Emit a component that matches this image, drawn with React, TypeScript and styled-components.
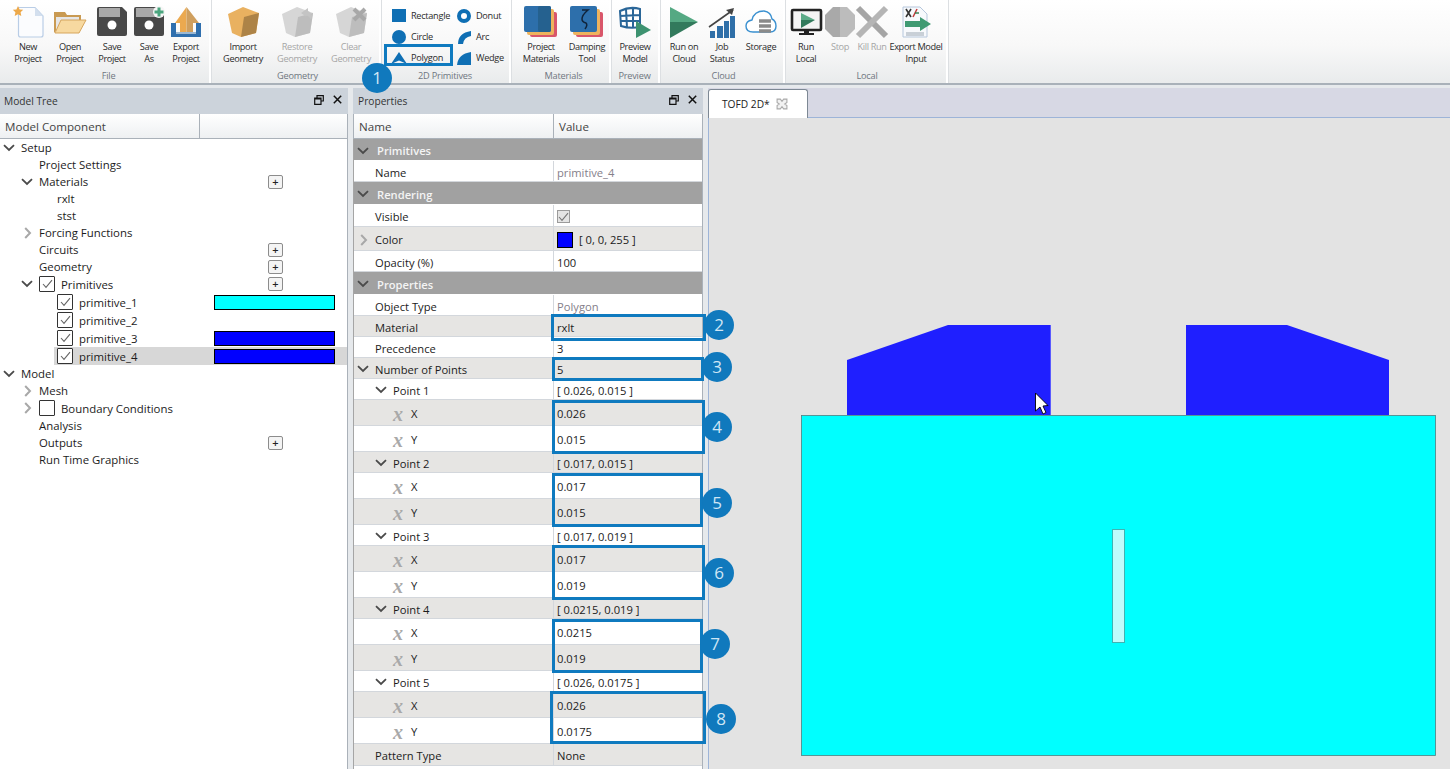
import React from 'react';
import styled, { createGlobalStyle } from 'styled-components';

const Global = createGlobalStyle`
  html, body { margin: 0; padding: 0; background: #fff; }
  body { font-family: "Open Sans", "Liberation Sans", sans-serif; color: #1c1c1c; }
`;

const Page = styled.div`
  position: relative;
  width: 1450px;
  height: 769px;
  overflow: hidden;
  display: flex;
  flex-direction: column;
  background: #e6e9ec;
`;

/* ---------- ribbon ---------- */
const Ribbon = styled.div`
  height: 83px;
  flex: none;
  display: flex;
  background: linear-gradient(#ffffff, #f8f8f8 55%, #e9ebec);
  border-bottom: 2px solid #a9b1b9;
`;

const Group = styled.div<{ $w: number; $pad?: number }>`
  width: ${({ $w }) => $w}px;
  flex: none;
  box-sizing: border-box;
  padding-left: ${({ $pad }) => $pad || 0}px;
  display: flex;
  flex-direction: column;
  border-right: 2px solid #fff;
  box-shadow: 1px 0 0 #dcdfe2;
`;

const GroupBody = styled.div`
  flex: 1;
  display: flex;
  min-height: 0;
`;

const GroupLabel = styled.div`
  height: 14px;
  line-height: 13px;
  text-align: center;
  font-size: 9.2px;
  letter-spacing: -0.2px;
  color: #6f7680;
`;

const RibbonButton = styled.div<{ $w: number; $off?: boolean }>`
  width: ${({ $w }) => $w}px;
  flex: none;
  padding-top: 6px;
  display: flex;
  flex-direction: column;
  align-items: center;
  text-align: center;
  font-size: 9.2px;
  line-height: 12px;
  letter-spacing: -0.35px;
  white-space: pre;
  color: ${({ $off }) => ($off ? '#a6a6a6' : '#2b2b2b')};
  svg { margin-bottom: 3px; display: block; overflow: visible; }
`;

const PrimGrid = styled.div`
  display: grid;
  grid-template-columns: 65px 60px;
  grid-auto-rows: 21px;
  padding: 5px 0 0 11px;
`;

const PrimItem = styled.div`
  display: flex;
  align-items: center;
  gap: 5px;
  font-size: 9.2px;
  letter-spacing: -0.3px;
  color: #2b2b2b;
  svg { overflow: visible; }
`;

/* ---------- panels ---------- */
const Workspace = styled.div`
  flex: 1;
  min-height: 0;
  display: flex;
  padding-top: 3px;
`;

const Panel = styled.div<{ $w: number; $gap: number }>`
  width: ${({ $w }) => $w}px;
  flex: none;
  margin-right: ${({ $gap }) => $gap}px;
  display: flex;
  flex-direction: column;
  background: #fff;
`;

const PanelHead = styled.div<{ $pad: number }>`
  height: 26px;
  flex: none;
  box-sizing: border-box;
  padding: 0 6px 0 ${({ $pad }) => $pad}px;
  display: flex;
  align-items: center;
  justify-content: space-between;
  background: #ccd3db;
  font-size: 10.2px;
  color: #333;
`;

const HeadIcons = styled.div`
  display: flex;
  align-items: center;
  gap: 9px;
  margin-top: -3px;
`;

const ColumnHead = styled.div<{ $edge?: boolean }>`
  height: 25px;
  flex: none;
  box-sizing: border-box;
  display: grid;
  grid-template-columns: 200px 1fr;
  background: linear-gradient(#fff, #eef0f2);
  border: 1px solid #aab1b9;
  border-top: 0;
  border-left-width: ${({ $edge }) => ($edge ? 1 : 0)}px;
  font-size: 11.6px;
  line-height: 25px;
  color: #444;
`;

const ColumnCell = styled.div`
  padding-left: 5px;
  border-right: 1px solid #aab1b9;
  &:last-child { border-right: 0; }
`;

/* tree */
const TreeBody = styled.div`
  flex: 1;
  border-right: 1px solid #aab1b9;
`;

const TreeRow = styled.div<{ $tall?: boolean; $selected?: boolean }>`
  height: ${({ $tall }) => ($tall ? 18 : 17)}px;
  display: grid;
  grid-template-columns: 214px 1fr;
  align-items: center;
  font-size: 11.4px;
  background: ${({ $selected }) =>
    $selected ? 'linear-gradient(to right, transparent 54px, #d7d7d7 54px)' : 'transparent'};
`;

const TreeName = styled.div<{ $indent: number }>`
  display: flex;
  align-items: center;
  padding-left: ${({ $indent }) => $indent}px;
  white-space: nowrap;
`;

const ChevronSlot = styled.span`
  width: 18px;
  flex: none;
  display: flex;
  justify-content: flex-start;
`;

const Check = styled.span`
  width: 16px;
  height: 16px;
  flex: none;
  box-sizing: border-box;
  margin-right: 6px;
  border: 1px solid #333;
  border-radius: 1px;
  background: #fff;
  display: flex;
  align-items: center;
  justify-content: center;
`;

const PlusButton = styled.div`
  width: 15px;
  height: 14px;
  margin-left: 54px;
  box-sizing: border-box;
  border: 1px solid #8c8c8c;
  border-radius: 2px;
  background: #f4f4f4;
  font-size: 11px;
  font-weight: 600;
  line-height: 12px;
  text-align: center;
  color: #222;
`;

const ColorBar = styled.span<{ $color: string }>`
  display: block;
  width: 121px;
  height: 15px;
  box-sizing: border-box;
  border: 1px solid #000;
  background: ${({ $color }) => $color};
`;

/* property grid */
const PropTable = styled.div`
  flex: 1;
  border-left: 1px solid #a5a5a5;
  border-right: 1px solid #aab1b9;
`;

const SectionRow = styled.div<{ $h: number }>`
  height: ${({ $h }) => $h}px;
  box-sizing: border-box;
  padding: 2px 0 0 3px;
  display: flex;
  align-items: center;
  background: #a1a1a1;
  border-bottom: 1px solid #fff;
  color: #f4f4f4;
  font-size: 11.2px;
  font-weight: 600;
  span { margin-left: 8px; }
`;

const PropRow = styled.div<{ $h: number; $shade?: boolean }>`
  height: ${({ $h }) => $h}px;
  box-sizing: border-box;
  display: grid;
  grid-template-columns: 200px 1fr;
  background: ${({ $shade }) => ($shade ? '#e6e5e3' : '#fff')};
  border-bottom: 1px solid #d3d7dc;
  font-size: 11.2px;
`;

const PropName = styled.div<{ $indent: number }>`
  display: flex;
  align-items: center;
  padding: 2px 0 0 ${({ $indent }) => $indent}px;
  border-right: 1px solid #d3d7dc;
  white-space: nowrap;
`;

const PropValue = styled.div<{ $muted?: boolean }>`
  display: flex;
  align-items: center;
  gap: 6px;
  padding: 2px 0 0 3px;
  white-space: nowrap;
  color: ${({ $muted }) => ($muted ? '#85808a' : '#1c1c1c')};
`;

const VarMark = styled.span`
  width: 12px;
  margin-right: 7px;
  text-align: center;
  font-family: "Liberation Serif", serif;
  font-style: italic;
  font-weight: 700;
  font-size: 20px;
  line-height: 16px;
  color: #a9a9a9;
`;

const Swatch = styled.span`
  width: 16px;
  height: 16px;
  box-sizing: border-box;
  border: 1px solid #000;
  background: #0000ff;
`;

const GrayBox = styled.span`
  width: 13px;
  height: 13px;
  box-sizing: border-box;
  border: 1px solid #9b9b9b;
  background: #e4e4e4;
  display: flex;
  align-items: center;
  justify-content: center;
`;

/* document area */
const DocArea = styled.div`
  flex: 1;
  min-width: 0;
  display: flex;
  flex-direction: column;
`;

const TabStrip = styled.div`
  height: 30px;
  flex: none;
  box-sizing: border-box;
  display: flex;
  align-items: flex-end;
  background: #d7d8e4;
  border-bottom: 1px solid #9db4d8;
`;

const Tab = styled.div`
  width: 100px;
  height: 29px;
  margin-bottom: -1px;
  box-sizing: border-box;
  display: flex;
  align-items: center;
  gap: 6px;
  padding-left: 13px;
  background: #fff;
  border: 1px solid #7d8894;
  border-bottom: 0;
  border-radius: 3px 3px 0 0;
  font-size: 10.2px;
  color: #222;
`;

const Canvas = styled.div`
  flex: 1;
  min-height: 0;
  background: #e3e3e3;
  border-left: 1px solid #9db4d8;
  svg { display: block; }
`;

/* annotations lying over the screenshot */
const Callout = styled.div`
  position: absolute;
  box-sizing: border-box;
  border: 3px solid #0f7abf;
  pointer-events: none;
`;

const Badge = styled.div`
  position: absolute;
  width: 30px;
  height: 30px;
  margin: -15px 0 0 -15px;
  border-radius: 50%;
  background: #1079bd;
  color: #cfe6f5;
  font-size: 17px;
  line-height: 30px;
  text-align: center;
`;

/* ---------- small drawings ---------- */
const Chevron = ({ open }: { open: boolean }) =>
  open ? (
    <svg width="12" height="8" viewBox="0 0 12 8">
      <path d="M1 1.2 L6 6 L11 1.2" fill="none" stroke="#4a4a4a" strokeWidth="1.8" />
    </svg>
  ) : (
    <svg width="12" height="12" viewBox="-3 0 12 12">
      <path d="M1.2 1 L6 6 L1.2 11" fill="none" stroke="#a8a8a8" strokeWidth="2" />
    </svg>
  );

const Tick = ({ color = '#666' }: { color?: string }) => (
  <svg width="11" height="10" viewBox="0 0 11 10">
    <path d="M1 5 L4 8.4 L10 1.2" fill="none" stroke={color} strokeWidth="1.1" />
  </svg>
);

const RestoreIcon = () => (
  <svg width="10" height="10" viewBox="0 0 10 10">
    <path d="M3 2.5 V.7 H9.3 V6 H7.2 M.7 3 H7 V9.3 H.7 Z M.7 4 H7" fill="none" stroke="#111" strokeWidth="1.2" />
  </svg>
);

const CloseIcon = () => (
  <svg width="9" height="9" viewBox="0 0 9 9">
    <path d="M.8 .8 L8.2 8.2 M8.2 .8 L.8 8.2" stroke="#111" strokeWidth="1.5" />
  </svg>
);

const TabClose = () => (
  <svg width="12" height="12" viewBox="0 0 11 11">
    <path d="M1 1 H4 L5.5 3 L7 1 H10 V4 L8 5.5 L10 7 V10 H7 L5.5 8 L4 10 H1 V7 L3 5.5 L1 4 Z" fill="#f2f2f2" stroke="#a9a9a9" />
  </svg>
);

const Icon = ({ children, w = 32, h = 32 }: { children: React.ReactNode; w?: number; h?: number }) => (
  <svg width={w} height={h} viewBox={`0 0 ${w} ${h}`}>
    {children}
  </svg>
);

const NewIcon = () => (
  <Icon>
    <path d="M6.5 1.5 H23 L31 10 V29 Q31 31 29 31 H8.5 Q6.5 31 6.5 29 Z" fill="#fbfcfe" stroke="#b9cde6" strokeWidth="1.2" />
    <path d="M23 1.5 V10 H31 Z" fill="#d3dfee" />
    <path d="M6 0 L7.6 3.4 L11.2 3.8 L8.6 6.2 L9.3 10 L6 8.2 L2.7 10 L3.4 6.2 L.8 3.8 L4.4 3.4 Z" fill="#eda94a" />
  </Icon>
);

const OpenIcon = () => (
  <Icon>
    <path d="M0 27 V6 H11 L13 9 H27 V14 H10 Z" fill="#c99a52" />
    <path d="M2 27 V11 H25 V14 H8 Z" fill="#e6e6e6" />
    <path d="M7 14 H32 L25 27 H1 Z" fill="#f7d9a0" stroke="#d6a55c" />
  </Icon>
);

const SaveIcon = ({ plus }: { plus?: boolean }) => (
  <Icon>
    <path d="M1 3 Q1 1 3 1 H26 L31 6 V28 Q31 30 29 30 H3 Q1 30 1 28 Z" fill="#484848" />
    <rect x="3" y="2" width="21" height="9" fill="#a8a8a8" />
    <circle cx="16" cy="19" r="4.5" fill="#fff" />
    {plus && (
      <>
        <circle cx="26" cy="6" r="6" fill="#f6f6f6" />
        <path d="M26 1.5 V10.5 M21.5 6 H30.5" stroke="#4aa57e" strokeWidth="3" />
      </>
    )}
  </Icon>
);

const ExportIcon = () => (
  <Icon>
    <path d="M1 17 H6 V26 H26 V17 H31 V31 H1 Z" fill="#2f6fae" />
    <rect x="6" y="26" width="20" height="2" fill="#9cb8d2" />
    <path d="M16.5 1 L5 17 H10 V26 H16.5 Z" fill="#eba94f" />
    <path d="M16.5 1 L29 17 H23 V26 H16.5 Z" fill="#cf9f5e" />
  </Icon>
);

const CubeIcon = ({ off, cross }: { off?: boolean; cross?: boolean }) => (
  <Icon>
    <path d="M1 8 L16 1 L32 7 L29 27 L14 31 L5 27 Z" fill={off ? '#d6d6d6' : '#e9b160'} />
    <path d="M17 11 L32 7 L29 27 L14 31 Z" fill={off ? '#bdbdbd' : '#ad8347'} />
    {cross && <path d="M19 3 L30 14 M30 3 L19 14" stroke="#a8a8a8" strokeWidth="4" />}
    {off && !cross && <path d="M20 7 L27 2 L27 5 Q33 8 30 14 Q28 9 24 10 L27 12 Z" fill="#c4c4c4" />}
  </Icon>
);

const StackIcon = ({ zeta }: { zeta?: boolean }) => (
  <Icon w={34}>
    <rect x="6" y="6" width="27" height="25" rx="2" fill="#d9566a" />
    <rect x="3" y="3" width="27" height="26" rx="2" fill="#eeb35d" />
    <rect x="0" y="0" width="27" height="26" rx="2" fill="#2d6fab" />
    {!zeta && <rect x="14" y="0" width="13" height="26" rx="2" fill="#25618f" />}
    {zeta && <path d="M12 4 H18 Q12 9 12 13 Q12 16 16 17 Q18 19 15 23" fill="none" stroke="#10243a" strokeWidth="1.5" />}
  </Icon>
);

const PreviewIcon = () => (
  <Icon w={34}>
    <path d="M2 5 Q12 0 22 3 L22 21 Q12 23 3 20 Z M8 3 L9 22 M15 2 L15 22 M2 10 L22 9 M2 15 L22 15" fill="#fff" stroke="#2a6698" strokeWidth="2" />
    <path d="M18 15 L33 24 L18 32 Z" fill="#3d9270" />
  </Icon>
);

const PlayIcon = () => (
  <Icon>
    <path d="M2 1 L30 16 H2 Z" fill="#55a983" />
    <path d="M2 16 H30 L2 32 Z" fill="#327a5c" />
  </Icon>
);

const StatusIcon = () => (
  <Icon w={26}>
    <rect x="1" y="25" width="5" height="7" fill="#2f6fa8" />
    <rect x="8" y="20" width="6" height="12" fill="#2f6fa8" />
    <rect x="15" y="15" width="5" height="17" fill="#2f6fa8" />
    <rect x="21" y="10" width="5" height="22" fill="#2f6fa8" />
    <path d="M0 21 L24 4" stroke="#444" strokeWidth="1.6" />
    <path d="M17 4 L25 2 L23 9 Z" fill="#444" />
  </Icon>
);

const CloudIcon = () => (
  <Icon>
    <path d="M8 26 Q1 26 1 20 Q1 15 7 14 Q9 5 19 5 Q26 6 27 13 Q31 15 31 20 Q31 26 25 26 Z" fill="#fff" stroke="#3a90d0" strokeWidth="1.4" />
    <path d="M14 15 H26 M14 20 H26 M14 25 H26" stroke="#8a8a8a" strokeWidth="3.4" />
  </Icon>
);

const MonitorIcon = () => (
  <Icon>
    <rect x="2" y="4" width="29" height="20" rx="1" fill="#f4f4f4" stroke="#222" strokeWidth="2.6" />
    <path d="M11 7 L25 14 H11 Z" fill="#5cab88" />
    <path d="M11 14 H25 L11 22 Z" fill="#327a5c" />
    <path d="M14 25 H19 V27 H24 V29 H9 V27 H14 Z" fill="#222" />
  </Icon>
);

const StopIcon = () => (
  <Icon>
    <path d="M9 1 H16 V31 H9 L1 23 V9 Z" fill="#a9a9a9" />
    <path d="M16 1 H23 L31 9 V23 L23 31 H16 Z" fill="#bcbcbc" />
  </Icon>
);

const KillIcon = () => (
  <Icon>
    <path d="M2 2 L30 30" stroke="#a5a5a5" strokeWidth="6" />
    <path d="M30 2 L2 30" stroke="#b5b5b5" strokeWidth="6" />
  </Icon>
);

const ExportModelIcon = () => (
  <Icon>
    <path d="M3 1 H20 L27 8 V31 H3 Z" fill="#f7f9fc" stroke="#b6c7dc" />
    <path d="M6 3 L11 11 M11 3 L6 11" stroke="#333" strokeWidth="1.6" />
    <path d="M13 11 L17 3" stroke="#c23b3b" strokeWidth="1.6" />
    <path d="M15 7 L19 7" stroke="#2c7a4a" strokeWidth="1.4" />
    <path d="M6 27 H24 M6 29 H24" stroke="#9aa6b2" />
    <path d="M5 15 H20 V11 L31 18 L20 25 V21 H5 Z" fill="#3f9a73" />
  </Icon>
);

const Prim = ({ d }: { d: React.ReactNode }) => (
  <svg width="14" height="14" viewBox="0 0 14 14" style={{ flex: 'none' }}>
    {d}
  </svg>
);
const blue = '#0f6fb4';

/* ---------- data ---------- */
type Btn = { label: string; w: number; icon: React.ReactNode; off?: boolean };
type BtnGroup = { label: string; w: number; pad?: number; items: Btn[] };

const groups: BtnGroup[] = [
  {
    label: 'File',
    w: 211,
    pad: 8,
    items: [
      { label: 'New\nProject', w: 40, icon: <NewIcon /> },
      { label: 'Open\nProject', w: 44, icon: <OpenIcon /> },
      { label: 'Save\nProject', w: 40, icon: <SaveIcon /> },
      { label: 'Save\nAs', w: 34, icon: <SaveIcon plus /> },
      { label: 'Export\nProject', w: 40, icon: <ExportIcon /> },
    ],
  },
  {
    label: 'Geometry',
    w: 170,
    pad: 5,
    items: [
      { label: 'Import\nGeometry', w: 54, icon: <CubeIcon /> },
      { label: 'Restore\nGeometry', w: 54, icon: <CubeIcon off />, off: true },
      { label: 'Clear\nGeometry', w: 54, icon: <CubeIcon off cross />, off: true },
    ],
  },
];

const groups2: BtnGroup[] = [
  {
    label: 'Materials',
    w: 100,
    pad: 7,
    items: [
      { label: 'Project\nMaterials', w: 46, icon: <StackIcon /> },
      { label: 'Damping\nTool', w: 46, icon: <StackIcon zeta /> },
    ],
  },
  {
    label: 'Preview',
    w: 49,
    items: [{ label: 'Preview\nModel', w: 48, icon: <PreviewIcon /> }],
  },
  {
    label: 'Cloud',
    w: 125,
    pad: 4,
    items: [
      { label: 'Run on\nCloud', w: 40, icon: <PlayIcon /> },
      { label: 'Job\nStatus', w: 36, icon: <StatusIcon /> },
      { label: 'Storage', w: 42, icon: <CloudIcon /> },
    ],
  },
  {
    label: 'Local',
    w: 163,
    pad: 3,
    items: [
      { label: 'Run\nLocal', w: 36, icon: <MonitorIcon /> },
      { label: 'Stop', w: 32, icon: <StopIcon />, off: true },
      { label: 'Kill Run', w: 32, icon: <KillIcon />, off: true },
      { label: 'Export Model\nInput', w: 56, icon: <ExportModelIcon /> },
    ],
  },
];

const prims: { label: string; icon: React.ReactNode }[] = [
  { label: 'Rectangle', icon: <Prim d={<rect width="14" height="13" fill={blue} />} /> },
  { label: 'Donut', icon: <Prim d={<circle cx="7" cy="7" r="5" fill="#fff" stroke={blue} strokeWidth="4" />} /> },
  { label: 'Circle', icon: <Prim d={<circle cx="7" cy="7" r="7" fill={blue} />} /> },
  { label: 'Arc', icon: <Prim d={<path d="M1 14 Q1 3 14 1 V6 Q7 7 6 14 Z" fill={blue} />} /> },
  { label: 'Polygon', icon: <Prim d={<path d="M7 1 L15 13 L7 9.5 L-1 13 Z" fill={blue} />} /> },
  { label: 'Wedge', icon: <Prim d={<path d="M0 14 Q1 3 14 1 V14 Z" fill={blue} />} /> },
];

type TreeItem = {
  name: string;
  indent: number;
  tall?: boolean;
  chevron?: 'open' | 'closed';
  check?: boolean | 'empty';
  plus?: boolean;
  bar?: string;
  selected?: boolean;
};

const tree: TreeItem[] = [
  { name: 'Setup', indent: 3, chevron: 'open' },
  { name: 'Project Settings', indent: 39 },
  { name: 'Materials', indent: 21, chevron: 'open', plus: true },
  { name: 'rxlt', indent: 57 },
  { name: 'stst', indent: 57 },
  { name: 'Forcing Functions', indent: 21, chevron: 'closed' },
  { name: 'Circuits', indent: 39, plus: true },
  { name: 'Geometry', indent: 39, plus: true },
  { name: 'Primitives', indent: 21, chevron: 'open', check: true, plus: true, tall: true },
  { name: 'primitive_1', indent: 57, check: true, bar: '#00ffff', tall: true },
  { name: 'primitive_2', indent: 57, check: true, tall: true },
  { name: 'primitive_3', indent: 57, check: true, bar: '#0000ff', tall: true },
  { name: 'primitive_4', indent: 57, check: true, bar: '#0000ff', tall: true, selected: true },
  { name: 'Model', indent: 3, chevron: 'open' },
  { name: 'Mesh', indent: 21, chevron: 'closed' },
  { name: 'Boundary Conditions', indent: 21, chevron: 'closed', check: 'empty', tall: true },
  { name: 'Analysis', indent: 39 },
  { name: 'Outputs', indent: 39, plus: true },
  { name: 'Run Time Graphics', indent: 39 },
];

const points = [
  { name: 'Point 1', sum: '[ 0.026, 0.015 ]', x: '0.026', y: '0.015' },
  { name: 'Point 2', sum: '[ 0.017, 0.015 ]', x: '0.017', y: '0.015' },
  { name: 'Point 3', sum: '[ 0.017, 0.019 ]', x: '0.017', y: '0.019' },
  { name: 'Point 4', sum: '[ 0.0215, 0.019 ]', x: '0.0215', y: '0.019' },
  { name: 'Point 5', sum: '[ 0.026, 0.0175 ]', x: '0.026', y: '0.0175' },
];

const callouts = [
  { n: 1, x: 384, y: 44, w: 69, h: 22, cx: 377, cy: 78 },
  { n: 2, x: 551, y: 314, w: 155, h: 27, cx: 719, cy: 325 },
  { n: 3, x: 552, y: 357, w: 152, h: 24, cx: 717, cy: 367 },
  { n: 4, x: 552, y: 400, w: 153, h: 54, cx: 717, cy: 427 },
  { n: 5, x: 552, y: 473, w: 151, h: 54, cx: 717, cy: 503 },
  { n: 6, x: 552, y: 545, w: 153, h: 55, cx: 719, cy: 573 },
  { n: 7, x: 552, y: 619, w: 151, h: 54, cx: 715, cy: 644 },
  { n: 8, x: 550, y: 691, w: 156, h: 53, cx: 721, cy: 719 },
];

const RibbonGroup = ({ g }: { g: BtnGroup }) => (
  <Group $w={g.w} $pad={g.pad}>
    <GroupBody>
      {g.items.map((b) => (
        <RibbonButton key={b.label} $w={b.w} $off={b.off}>
          {b.icon}
          {b.label}
        </RibbonButton>
      ))}
    </GroupBody>
    <GroupLabel>{g.label}</GroupLabel>
  </Group>
);

const Section = ({ name, h }: { name: string; h: number }) => (
  <SectionRow $h={h}>
    <Chevron open />
    <span>{name}</span>
  </SectionRow>
);

export default function App() {
  return (
    <Page>
      <Global />
      <Ribbon>
        {groups.map((g) => (
          <RibbonGroup key={g.label} g={g} />
        ))}
        <Group $w={130}>
          <GroupBody>
            <PrimGrid>
              {prims.map((p) => (
                <PrimItem key={p.label}>
                  {p.icon}
                  {p.label}
                </PrimItem>
              ))}
            </PrimGrid>
          </GroupBody>
          <GroupLabel>2D Primitives</GroupLabel>
        </Group>
        {groups2.map((g) => (
          <RibbonGroup key={g.label} g={g} />
        ))}
      </Ribbon>

      <Workspace>
        <Panel $w={348} $gap={5}>
          <PanelHead $pad={4}>
            Model Tree
            <HeadIcons>
              <RestoreIcon />
              <CloseIcon />
            </HeadIcons>
          </PanelHead>
          <ColumnHead>
            <ColumnCell>Model Component</ColumnCell>
            <ColumnCell />
          </ColumnHead>
          <TreeBody>
            {tree.map((t) => (
              <TreeRow key={t.name} $tall={t.tall} $selected={t.selected}>
                <TreeName $indent={t.indent}>
                  {t.chevron && (
                    <ChevronSlot>
                      <Chevron open={t.chevron === 'open'} />
                    </ChevronSlot>
                  )}
                  {t.check && <Check>{t.check === true && <Tick />}</Check>}
                  {t.name}
                </TreeName>
                <div>
                  {t.plus && <PlusButton>+</PlusButton>}
                  {t.bar && <ColorBar $color={t.bar} />}
                </div>
              </TreeRow>
            ))}
          </TreeBody>
        </Panel>

        <Panel $w={350} $gap={5}>
          <PanelHead $pad={5}>
            Properties
            <HeadIcons>
              <RestoreIcon />
              <CloseIcon />
            </HeadIcons>
          </PanelHead>
          <ColumnHead $edge>
            <ColumnCell>Name</ColumnCell>
            <ColumnCell>Value</ColumnCell>
          </ColumnHead>
          <PropTable>
            <Section name="Primitives" h={22} />
            <PropRow $h={21}>
              <PropName $indent={21}>Name</PropName>
              <PropValue $muted>primitive_4</PropValue>
            </PropRow>
            <Section name="Rendering" h={23} />
            <PropRow $h={22}>
              <PropName $indent={21}>Visible</PropName>
              <PropValue>
                <GrayBox>
                  <Tick color="#777" />
                </GrayBox>
              </PropValue>
            </PropRow>
            <PropRow $h={24} $shade>
              <PropName $indent={3}>
                <ChevronSlot>
                  <Chevron open={false} />
                </ChevronSlot>
                Color
              </PropName>
              <PropValue>
                <Swatch />[ 0, 0, 255 ]
              </PropValue>
            </PropRow>
            <PropRow $h={21}>
              <PropName $indent={21}>Opacity (%)</PropName>
              <PropValue>100</PropValue>
            </PropRow>
            <Section name="Properties" h={23} />
            <PropRow $h={21}>
              <PropName $indent={21}>Object Type</PropName>
              <PropValue $muted>Polygon</PropValue>
            </PropRow>
            <PropRow $h={21} $shade>
              <PropName $indent={21}>Material</PropName>
              <PropValue>rxlt</PropValue>
            </PropRow>
            <PropRow $h={21}>
              <PropName $indent={21}>Precedence</PropName>
              <PropValue>3</PropValue>
            </PropRow>
            <PropRow $h={21} $shade>
              <PropName $indent={3}>
                <ChevronSlot>
                  <Chevron open />
                </ChevronSlot>
                Number of Points
              </PropName>
              <PropValue>5</PropValue>
            </PropRow>
            {points.map((p, i) => (
              <React.Fragment key={p.name}>
                <PropRow $h={21} $shade={i % 2 === 1}>
                  <PropName $indent={21}>
                    <ChevronSlot>
                      <Chevron open />
                    </ChevronSlot>
                    {p.name}
                  </PropName>
                  <PropValue>{p.sum}</PropValue>
                </PropRow>
                <PropRow $h={26} $shade={i % 2 === 0}>
                  <PropName $indent={38}>
                    <VarMark>x</VarMark>X
                  </PropName>
                  <PropValue>{p.x}</PropValue>
                </PropRow>
                <PropRow $h={26} $shade={i % 2 === 1}>
                  <PropName $indent={38}>
                    <VarMark>x</VarMark>Y
                  </PropName>
                  <PropValue>{p.y}</PropValue>
                </PropRow>
              </React.Fragment>
            ))}
            <PropRow $h={22} $shade>
              <PropName $indent={21}>Pattern Type</PropName>
              <PropValue>None</PropValue>
            </PropRow>
          </PropTable>
        </Panel>

        <DocArea>
          <TabStrip>
            <Tab>
              TOFD 2D*
              <TabClose />
            </Tab>
          </TabStrip>
          <Canvas>
            <svg width="741" height="651" viewBox="709 118 741 651">
              <path d="M847 360 L948 325 H1050 V415 H847 Z" fill="#1f1fff" />
              <path d="M1186 325 H1287 L1389 360 V415 H1186 Z" fill="#1f1fff" />
              <path d="M1050.5 325 V415" stroke="#5a5aff" />
              <rect x="801.5" y="415.5" width="634" height="340" fill="#00ffff" stroke="#4f7f7f" strokeWidth="0.8" />
              <rect x="1112.5" y="529.5" width="12" height="113" fill="#bffcfc" stroke="#3fb3b3" />
              <path d="M1035.5 393 V411 L1040 407 L1043 414 L1046 412.5 L1043 406 L1048 405.5 Z" fill="#fff" stroke="#000" strokeWidth="0.9" />
            </svg>
          </Canvas>
        </DocArea>
      </Workspace>

      {callouts.map((c) => (
        <React.Fragment key={c.n}>
          <Callout style={{ left: c.x, top: c.y, width: c.w, height: c.h }} />
          <Badge style={{ left: c.cx, top: c.cy }}>{c.n}</Badge>
        </React.Fragment>
      ))}
    </Page>
  );
}
